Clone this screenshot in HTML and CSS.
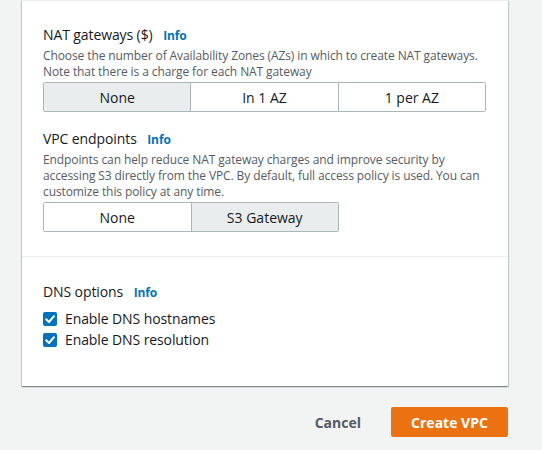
FILE: index.html
```html
<!DOCTYPE html>
<html lang="en">
<head>
<meta charset="utf-8">
<title>Create VPC</title>
<link rel="stylesheet" href="styles.css">
</head>
<body>
<div class="page">
  <div class="card">
    <section class="section">
      <div class="field">
        <div class="label">NAT gateways ($) <a class="info" href="#">Info</a></div>
        <div class="desc">Choose the number of Availability Zones (AZs) in which to create NAT gateways.<br>Note that there is a charge for each NAT gateway</div>
        <div class="segmented seg-3">
          <button class="seg active">None</button>
          <button class="seg">In 1 AZ</button>
          <button class="seg">1 per AZ</button>
        </div>
      </div>
      <div class="field field-gap">
        <div class="label">VPC endpoints <a class="info" href="#">Info</a></div>
        <div class="desc">Endpoints can help reduce NAT gateway charges and improve security by<br>accessing S3 directly from the VPC. By default, full access policy is used. You can<br>customize this policy at any time.</div>
        <div class="segmented seg-2">
          <button class="seg">None</button>
          <button class="seg active">S3 Gateway</button>
        </div>
      </div>
    </section>
    <section class="section section-dns">
      <div class="label">DNS options <a class="info" href="#">Info</a></div>
      <label class="check">
        <span class="box"><svg viewBox="0 0 14 14" width="14" height="14"><path d="M3.2 7.2 L6 10 L11 4.2" fill="none" stroke="#fff" stroke-width="2" stroke-linecap="round" stroke-linejoin="round"/></svg></span>
        Enable DNS hostnames
      </label>
      <label class="check">
        <span class="box"><svg viewBox="0 0 14 14" width="14" height="14"><path d="M3.2 7.2 L6 10 L11 4.2" fill="none" stroke="#fff" stroke-width="2" stroke-linecap="round" stroke-linejoin="round"/></svg></span>
        Enable DNS resolution
      </label>
    </section>
  </div>
  <div class="actions">
    <button class="btn-link">Cancel</button>
    <button class="btn-primary">Create VPC</button>
  </div>
</div>
</body>
</html>
```

FILE: styles.css
```css
html, body {
  margin: 0;
  padding: 0;
}

body {
  background: #f2f3f3;
  font-family: "Open Sans", "Noto Sans", Arial, sans-serif;
  color: #16191f;
}

.page {
  width: 486px;
  margin-left: 22px;
}

.card {
  background: #fff;
  border-top: 1px solid #eaeded;
  box-shadow: 0 1px 1px 0 rgba(0, 28, 36, 0.3),
              1px 1px 1px 0 rgba(0, 28, 36, 0.15),
              -1px 1px 1px 0 rgba(0, 28, 36, 0.15);
}

.section {
  padding: 24px 20px 24px 21px;
}

.section + .section {
  border-top: 1px solid #eaeded;
}

.section-dns {
  padding-top: 25px;
  padding-bottom: 36px;
}

.label {
  font-size: 14px;
  line-height: 20px;
  letter-spacing: -0.1px;
}

.info {
  margin-left: 7px;
  font-size: 12px;
  font-weight: 700;
  color: #0073bb;
  text-decoration: none;
}

.desc {
  margin-top: 2px;
  font-size: 12px;
  line-height: 16px;
  color: #545b64;
  letter-spacing: -0.1px;
}

.field-gap {
  margin-top: 17px;
}

.segmented {
  display: flex;
  margin-top: 2px;
  border: 1px solid #aab7b8;
  border-radius: 2px;
  overflow: hidden;
}

.seg-3 {
  width: 441px;
}

.seg-2 {
  width: 294px;
}

.seg {
  flex: 1;
  height: 28px;
  margin: 0;
  padding: 0;
  border: 0;
  background: #fff;
  font-family: inherit;
  font-size: 14px;
  color: #16191f;
}

.seg + .seg {
  border-left: 1px solid #aab7b8;
}

.seg.active {
  background: #eaeded;
}

.check {
  display: flex;
  align-items: center;
  gap: 8px;
  height: 21px;
  font-size: 14px;
  letter-spacing: -0.1px;
}

.label + .check {
  margin-top: 5px;
}

.box {
  display: block;
  width: 14px;
  height: 14px;
  background: #0073bb;
  border-radius: 2px;
}

.box svg {
  display: block;
}

.actions {
  display: flex;
  justify-content: flex-end;
  align-items: center;
  gap: 14px;
  margin-top: 21px;
}

.btn-link {
  border: 0;
  background: none;
  padding: 0 16px;
  font-family: inherit;
  font-size: 14px;
  font-weight: 700;
  color: #545b64;
}

.btn-primary {
  width: 117px;
  height: 30px;
  border: 0;
  border-radius: 2px;
  background: #ec7211;
  color: #fff;
  font-family: inherit;
  font-size: 14px;
  font-weight: 700;
}
```
